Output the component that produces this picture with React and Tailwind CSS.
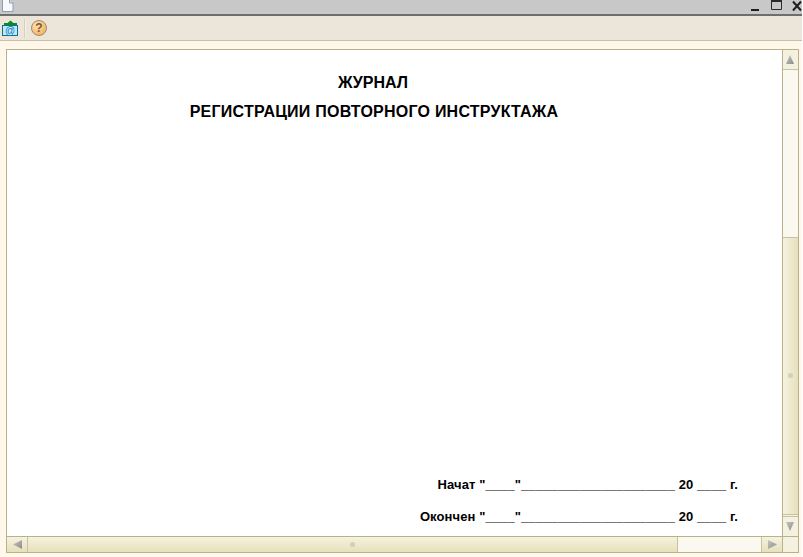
import React from "react";

const Arrow = ({ dir }) => {
  const points = {
    up: "4,0 8,9 0,9",
    down: "0,0 8,0 4,9",
    left: "0,4.5 9,0 9,9",
    right: "0,0 9,4.5 0,9",
  };
  return (
    <svg width="9" height="9" viewBox="0 0 9 9">
      <defs>
        <linearGradient id="arrowFill" x1="0" y1="0" x2="1" y2="1">
          <stop offset="0" stopColor="#c4c4c0" />
          <stop offset="1" stopColor="#8c8c88" />
        </linearGradient>
      </defs>
      <polygon points={points[dir]} fill="url(#arrowFill)" />
    </svg>
  );
};

const Grip = () => <div className="size-[5px] rounded-full bg-[#cfcfc0]" />;

const SignLine = ({ label }) => (
  <p className="whitespace-nowrap text-right text-[13px] leading-[15px] font-bold tracking-[0.1px] text-black">
    {label} "____"_____________________ 20 ____ г.
  </p>
);

const App = () => {
  return (
    <div className="flex h-[557px] w-[803px] flex-col overflow-hidden bg-white font-['Liberation_Sans',Arial,sans-serif]">
      <div className="mr-px flex h-[557px] flex-col bg-[#fff8ea] pb-[4px]">
        {/* Window title */}
        <div className="flex h-[16px] shrink-0 items-start justify-between border-b-2 border-[#6e6e6e] bg-[#c8c8c8]">
          <svg width="13" height="13" viewBox="0 0 13 13" className="-mt-px ml-px">
            <path d="M1.5 0.5H8.5L12 4V12.5H1.5Z" fill="#f8f9fc" stroke="#8f9cb4" />
            <path d="M8.5 0.5V4H12" fill="#dfe5ef" stroke="#8f9cb4" />
          </svg>
          <div className="flex items-start">
            <svg width="12" height="14" viewBox="0 0 12 14">
              <rect x="0" y="9" width="8" height="2" fill="#1e1e1e" />
            </svg>
            <svg width="12" height="13" viewBox="0 0 12 13" className="ml-[8px] -mt-px">
              <path d="M0.5 1.5H10.5V10.5H0.5Z" fill="none" stroke="#2a2a2a" />
              <rect x="0" y="1" width="11" height="2" fill="#2a2a2a" />
            </svg>
            <svg width="10" height="13" viewBox="0 0 10 13" className="ml-[9px]">
              <path d="M1 1.5L9 10.5M9 1.5L1 10.5" stroke="#1e1e1e" strokeWidth="2" fill="none" />
            </svg>
          </div>
        </div>

        {/* Toolbar */}
        <div className="flex h-[25px] shrink-0 items-center border-b border-[#c8c0a4] bg-[#ece6da] pl-[2px]">
          <svg width="17" height="17" viewBox="0 0 17 17">
            <path d="M8.5 0.5L12 3.5H5Z" fill="#0a8a20" />
            <rect x="2" y="3" width="13" height="2" fill="#0a8a20" />
            <rect x="0.5" y="5.5" width="15" height="10" fill="#bdeafc" stroke="#0a6f96" />
            <text x="8" y="13.5" textAnchor="middle" fontSize="10" fill="#1478b4">
              @
            </text>
          </svg>
          <div className="ml-[5px] h-[19px] w-[2px] border-r border-[#f6f2e8] bg-[#d4cebe]" />
          <div className="ml-[5px] flex size-[16px] items-center justify-center rounded-full border border-[#a08a70] bg-[radial-gradient(circle_at_35%_30%,#ffe0b0,#f0a850)] text-[12px] leading-none font-bold text-[#7a5a30]">
            ?
          </div>
        </div>

        {/* Document panel */}
        <div className="ml-[6px] mr-[3px] mt-[8px] flex min-h-0 flex-1 flex-col border border-[#b8b28c] bg-white">
          <div className="flex min-h-0 flex-1">
            <div className="flex min-w-0 flex-1 flex-col justify-between pt-[24px] pb-[12px] pr-[44px]">
              <div className="flex flex-col items-center gap-[11px] pl-[3px] text-[16px] leading-[18px] font-bold text-black">
                <p className="pr-[2px]">ЖУРНАЛ</p>
                <p className="tracking-[0.23px]">РЕГИСТРАЦИИ ПОВТОРНОГО ИНСТРУКТАЖА</p>
              </div>
              <div className="flex flex-col gap-[17px]">
                <SignLine label="Начат" />
                <SignLine label="Окончен" />
              </div>
            </div>

            {/* Vertical scrollbar */}
            <div className="flex w-[16px] shrink-0 flex-col border-l border-[#b8b28c]">
              <div className="flex h-[20px] shrink-0 items-center justify-center border-b border-[#c8c2a0] bg-[#f5f1e0]">
                <Arrow dir="up" />
              </div>
              <div className="h-[167px] shrink-0 bg-[#faf8ef]" />
              <div className="flex flex-1 flex-col items-center justify-end border-t border-[#c8c2a0] bg-gradient-to-r from-[#f6f2de] to-[#e6e0bc]">
                <div className="mb-[136px]">
                  <Grip />
                </div>
              </div>
              <div className="flex h-[22px] shrink-0 items-center justify-center border-t-[3px] border-double border-[#c8c2a0] bg-[#f5f1e0]">
                <Arrow dir="down" />
              </div>
            </div>
          </div>

          {/* Horizontal scrollbar */}
          <div className="flex h-[16px] shrink-0 border-t border-[#b8b28c]">
            <div className="flex w-[21px] shrink-0 items-center justify-center border-r border-[#c8c2a0] bg-gradient-to-b from-[#f6f2de] to-[#e6e0bc]">
              <Arrow dir="left" />
            </div>
            <div className="flex flex-1 items-center justify-center bg-gradient-to-b from-[#f6f2de] to-[#e6e0bc]">
              <Grip />
            </div>
            <div className="w-[84px] shrink-0 border-l border-[#c8c2a0] bg-[#faf8ef]" />
            <div className="flex w-[21px] shrink-0 items-center justify-center border-l border-[#c8c2a0] bg-gradient-to-b from-[#f6f2de] to-[#e6e0bc]">
              <Arrow dir="right" />
            </div>
            <div className="w-[16px] shrink-0 border-l border-[#b8b28c] bg-[#f5f1e0]" />
          </div>
        </div>
      </div>
    </div>
  );
};

export default App;
